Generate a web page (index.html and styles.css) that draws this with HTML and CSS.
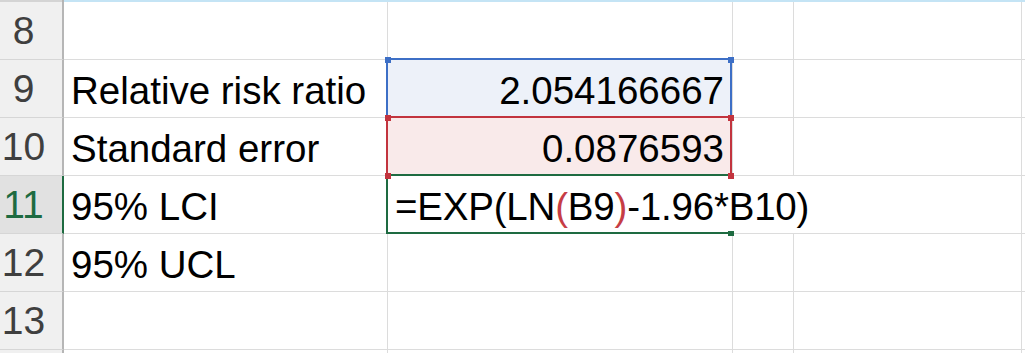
FILE: index.html
```html
<!DOCTYPE html>
<html>
<head>
<meta charset="utf-8">
<link rel="stylesheet" href="styles.css">
</head>
<body>
<div class="sheet">
  <div class="top-h"></div>
  <div class="top-c"></div>

  <div class="h">8</div>
  <div class="c"></div>
  <div class="c"></div>
  <div class="c"></div>
  <div class="c"></div>
  <div class="c end"></div>

  <div class="h">9</div>
  <div class="c">Relative risk ratio</div>
  <div class="c num fill-blue">2.054166667</div>
  <div class="c"></div>
  <div class="c"></div>
  <div class="c end"></div>

  <div class="h">10</div>
  <div class="c">Standard error</div>
  <div class="c num fill-red">0.0876593</div>
  <div class="c"></div>
  <div class="c"></div>
  <div class="c end"></div>

  <div class="h active">11</div>
  <div class="c">95% LCI</div>
  <div class="c edit">=EXP(LN<span class="ref">(</span>B9<span class="ref">)</span>-1.96*B10)</div>
  <div class="c end"></div>

  <div class="h">12</div>
  <div class="c">95% UCL</div>
  <div class="c"></div>
  <div class="c"></div>
  <div class="c"></div>
  <div class="c end"></div>

  <div class="h">13</div>
  <div class="c"></div>
  <div class="c"></div>
  <div class="c"></div>
  <div class="c"></div>
  <div class="c end"></div>

  <div class="h"></div>
  <div class="c"></div>
  <div class="c"></div>
  <div class="c"></div>
  <div class="c"></div>
  <div class="c end"></div>

  <div class="box box-blue"></div>
  <div class="box box-red"></div>
  <div class="box box-green"></div>
  <div class="knob knob-blue k1"></div>
  <div class="knob knob-blue k2"></div>
  <div class="knob knob-red k3"></div>
  <div class="knob knob-red k4"></div>
  <div class="knob knob-red k5"></div>
  <div class="knob knob-red k6"></div>
  <div class="knob knob-green k7"></div>
</div>
</body>
</html>
```

FILE: styles.css
```css
html, body {
  margin: 0;
  padding: 0;
  background: #ffffff;
  overflow: hidden;
}

.sheet {
  position: relative;
  width: 1025px;
  height: 353px;
  overflow: hidden;
  display: grid;
  grid-template-columns: 64px 324px 345px 61px 228px 3px;
  grid-template-rows: 2px repeat(7, 58px);
  font-family: "Liberation Sans", Arial, sans-serif;
  font-size: 38.5px;
  line-height: 1.15;
  color: #000000;
}

.top-h {
  background: #d4d4d4;
  border-right: 2px solid #b4b4b4;
  box-sizing: border-box;
}

.top-c {
  grid-column: span 5;
  background: #c4e4f5;
}

.h {
  box-sizing: border-box;
  background: #f0f0f0;
  border-right: 2px solid #b6b6b6;
  border-bottom: 1px solid #d6d6d6;
  color: #3f3f3f;
  font-size: 39px;
  display: flex;
  align-items: flex-end;
  justify-content: center;
  padding-bottom: 5px;
  padding-right: 15px;
}

.h.active {
  background: #e1e1e1;
  color: #1e6b41;
  border-right-color: #1e6b41;
}

.c {
  box-sizing: border-box;
  border-right: 1px solid #dcdcdc;
  border-bottom: 1px solid #dcdcdc;
  display: flex;
  align-items: flex-end;
  padding: 0 8px 4px 7px;
  white-space: nowrap;
}

.c.end {
  border-right: none;
  padding: 0;
}

.num {
  justify-content: flex-end;
}

.fill-blue {
  background: #edf1f9;
}

.fill-red {
  background: #f9eaea;
}

.edit {
  grid-column: span 3;
  overflow: visible;
  letter-spacing: -0.2px;
}

.ref {
  color: #c63d45;
}

.box {
  position: absolute;
  box-sizing: border-box;
  width: 346px;
  height: 60px;
  left: 386px;
}

.box-blue {
  top: 58px;
  border: 2px solid #3d6fc6;
}

.box-red {
  top: 116px;
  border: 2px solid #c2343e;
}

.box-green {
  top: 174px;
  border-top: 2px solid #1e6b41;
  border-left: 2px solid #1e6b41;
  border-bottom: 2px solid #1e6b41;
}

.knob {
  position: absolute;
  width: 6px;
  height: 6px;
}

.knob-blue { background: #3d6fc6; }
.knob-red { background: #c2343e; }
.knob-green { background: #1e6b41; height: 5px; }

.k1 { left: 385px; top: 57px; }
.k2 { left: 728px; top: 57px; }
.k3 { left: 385px; top: 115px; }
.k4 { left: 728px; top: 115px; }
.k5 { left: 385px; top: 173px; }
.k6 { left: 728px; top: 173px; }
.k7 { left: 728px; top: 231px; }
```
